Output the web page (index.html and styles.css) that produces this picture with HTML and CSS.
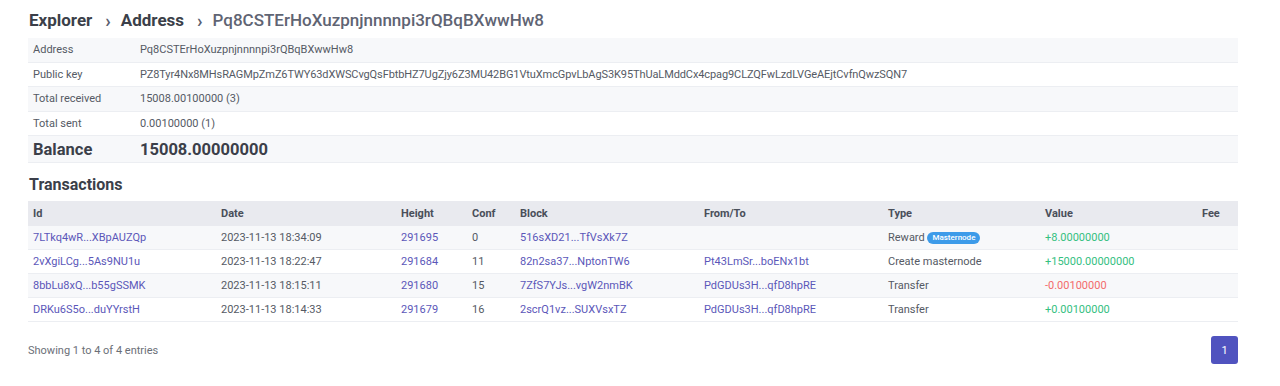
FILE: index.html
```html
<!DOCTYPE html>
<html>
<head>
<meta charset="utf-8">
<link rel="stylesheet" href="styles.css">
</head>
<body>
<div class="page">
  <div class="crumbs">
    <span class="crumb">Explorer</span>
    <span class="sep">›</span>
    <span class="crumb">Address</span>
    <span class="sep">›</span>
    <span class="crumb current">Pq8CSTErHoXuzpnjnnnnpi3rQBqBXwwHw8</span>
  </div>

  <table class="info">
    <tr class="odd"><td class="lbl">Address</td><td>Pq8CSTErHoXuzpnjnnnnpi3rQBqBXwwHw8</td></tr>
    <tr><td class="lbl">Public key</td><td class="key">PZ8Tyr4Nx8MHsRAGMpZmZ6TWY63dXWSCvgQsFbtbHZ7UgZjy6Z3MU42BG1VtuXmcGpvLbAgS3K95ThUaLMddCx4cpag9CLZQFwLzdLVGeAEjtCvfnQwzSQN7</td></tr>
    <tr class="odd"><td class="lbl">Total received</td><td>15008.00100000 (3)</td></tr>
    <tr><td class="lbl">Total sent</td><td>0.00100000 (1)</td></tr>
    <tr class="odd balance"><td class="lbl">Balance</td><td>15008.00000000</td></tr>
  </table>

  <h2 class="section">Transactions</h2>

  <table class="tx">
    <colgroup>
      <col class="c-id"><col class="c-date"><col class="c-height"><col class="c-conf"><col class="c-block"><col class="c-from"><col class="c-type"><col class="c-value"><col class="c-fee">
    </colgroup>
    <thead>
      <tr><th>Id</th><th>Date</th><th>Height</th><th>Conf</th><th>Block</th><th>From/To</th><th>Type</th><th>Value</th><th>Fee</th></tr>
    </thead>
    <tbody>
      <tr class="odd">
        <td><a class="link">7LTkq4wR...XBpAUZQp</a></td>
        <td>2023-11-13 18:34:09</td>
        <td><a class="link">291695</a></td>
        <td>0</td>
        <td><a class="link">516sXD21...TfVsXk7Z</a></td>
        <td></td>
        <td>Reward <span class="badge">Masternode</span></td>
        <td class="pos">+8.00000000</td>
        <td></td>
      </tr>
      <tr>
        <td><a class="link">2vXgiLCg...5As9NU1u</a></td>
        <td>2023-11-13 18:22:47</td>
        <td><a class="link">291684</a></td>
        <td>11</td>
        <td><a class="link">82n2sa37...NptonTW6</a></td>
        <td><a class="link">Pt43LmSr...boENx1bt</a></td>
        <td>Create masternode</td>
        <td class="pos">+15000.00000000</td>
        <td></td>
      </tr>
      <tr class="odd">
        <td><a class="link">8bbLu8xQ...b55gSSMK</a></td>
        <td>2023-11-13 18:15:11</td>
        <td><a class="link">291680</a></td>
        <td>15</td>
        <td><a class="link">7ZfS7YJs...vgW2nmBK</a></td>
        <td><a class="link">PdGDUs3H...qfD8hpRE</a></td>
        <td>Transfer</td>
        <td class="neg">-0.00100000</td>
        <td></td>
      </tr>
      <tr>
        <td><a class="link">DRKu6S5o...duYYrstH</a></td>
        <td>2023-11-13 18:14:33</td>
        <td><a class="link">291679</a></td>
        <td>16</td>
        <td><a class="link">2scrQ1vz...SUXVsxTZ</a></td>
        <td><a class="link">PdGDUs3H...qfD8hpRE</a></td>
        <td>Transfer</td>
        <td class="pos">+0.00100000</td>
        <td></td>
      </tr>
    </tbody>
  </table>

  <div class="footer">
    <span class="showing">Showing 1 to 4 of 4 entries</span>
    <span class="pagebtn">1</span>
  </div>
</div>
</body>
</html>
```

FILE: styles.css
```css
html, body {
  margin: 0;
  padding: 0;
  background: #ffffff;
}
body {
  font-family: Roboto, "Noto Sans", sans-serif;
  color: #555a64;
}
.page {
  width: 1210px;
  margin-left: 28px;
  padding-top: 8px;
}
.crumbs {
  height: 24px;
  display: flex;
  align-items: center;
  margin-left: 1px;
  margin-bottom: 6px;
  font-size: 17px;
  font-weight: 700;
  color: #3b3f49;
}
.sep {
  color: #5b6070;
  font-size: 18px;
  margin: 0 10px 0 13px;
  font-weight: 700;
}
.crumb.current {
  color: #5f6473;
  font-weight: 500;
}
table {
  border-collapse: collapse;
  width: 1210px;
}
.info td {
  height: 23.5px;
  padding: 0 5px;
  font-size: 11px;
  border-bottom: 1px solid #eceef2;
  white-space: nowrap;
}
.info td.lbl {
  width: 97px;
}
.info td.key {
  letter-spacing: -0.1px;
}
.info tr.odd td {
  background: #f7f8fa;
}
.info tr.balance td {
  height: 26px;
  font-size: 16.5px;
  font-weight: 700;
  color: #3b3f49;
}
.section {
  margin: 11px 0 5px 1px;
  font-size: 16px;
  font-weight: 700;
  color: #3b3f49;
  height: 22px;
  line-height: 22px;
}
.tx {
  table-layout: fixed;
}
.c-id { width: 188px; }
.c-date { width: 180px; }
.c-height { width: 71px; }
.c-conf { width: 48px; }
.c-block { width: 184px; }
.c-from { width: 184px; }
.c-type { width: 157px; }
.c-value { width: 157px; }
.c-fee { width: 41px; }
.tx th {
  height: 25px;
  padding: 0 5px;
  text-align: left;
  font-size: 11px;
  font-weight: 700;
  color: #4a4f5a;
  background: #e9eaef;
}
.tx td {
  height: 23px;
  padding: 0 5px;
  font-size: 11px;
  border-bottom: 1px solid #eceef2;
  white-space: nowrap;
}
.tx tr.odd td {
  background: #f7f8fa;
}
.link {
  color: #5b57b9;
  text-decoration: none;
}
.pos {
  color: #35c07f;
}
.neg {
  color: #f36b6b;
}
.badge {
  display: inline-block;
  background: #3d9be9;
  color: #ffffff;
  font-size: 8px;
  font-weight: 500;
  line-height: 12px;
  padding: 0 5px;
  border-radius: 7px;
  vertical-align: 1px;
}
.footer {
  display: flex;
  justify-content: space-between;
  align-items: center;
  margin-top: 14px;
}
.showing {
  font-size: 11px;
  color: #6b6f78;
}
.pagebtn {
  width: 27px;
  height: 28px;
  display: flex;
  align-items: center;
  justify-content: center;
  background: #5053bf;
  color: #ffffff;
  font-size: 11px;
  border-radius: 3px;
}
```
